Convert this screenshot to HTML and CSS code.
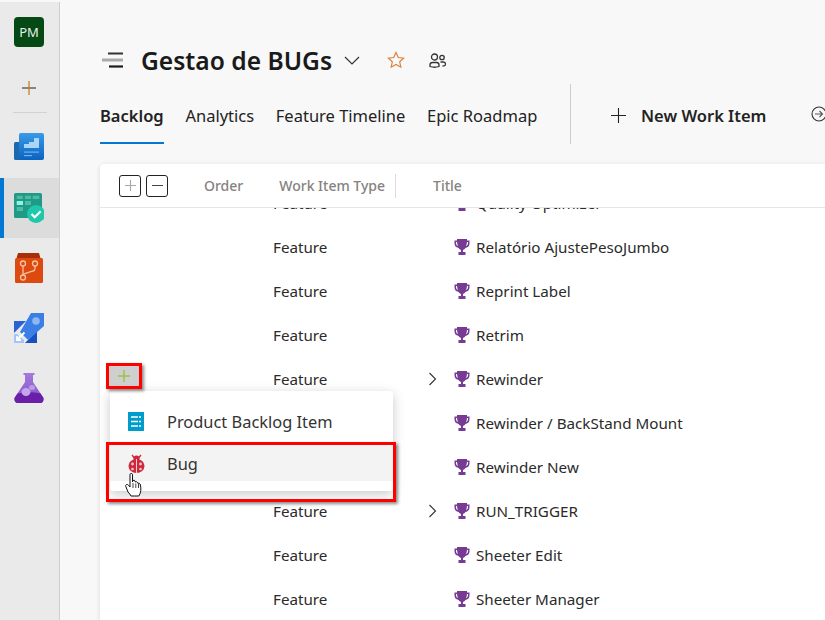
FILE: index.html
```html
<!DOCTYPE html>
<html lang="en">

<head>
    <meta charset="UTF-8">
    <title>Gestao de BUGs - Backlog</title>
    <link rel="stylesheet" href="styles.css">
</head>

<body>
    <nav class="sidebar">
        <div class="nav-project"><span class="avatar">PM</span></div>
        <div class="nav-add">
            <svg width="14" height="14" viewBox="0 0 14 14">
                <path d="M0 7H14" stroke="#222" stroke-width="1" />
                <path d="M7 0V14" stroke="#c8801e" stroke-width="1.300" />
            </svg>
        </div>
        <div class="nav-divider"></div>

        <a class="nav-item">
            <svg width="30" height="30" viewBox="0 0 30 30">
                <defs>
                    <linearGradient id="ov" x1="0" y1="0" x2="0" y2="1">
                        <stop offset="0" stop-color="#3a9ae8" />
                        <stop offset="1" stop-color="#0c62c0" />
                    </linearGradient>
                    <linearGradient id="fl" x1="0" y1="0" x2="0" y2="1">
                        <stop offset="0" stop-color="#a37ade" />
                        <stop offset="1" stop-color="#8550c8" />
                    </linearGradient>
                </defs>
                <rect x="0" y="9" width="8" height="18" rx="1.500" fill="#1b69ae" />
                <rect x="5" y="0" width="25" height="27" rx="2" fill="url(#ov)" />
                <path d="M10 11h5v4h-5zM15 9h5v6h-5zM20 5h5v10h-5z" fill="#a9d6f8" />
                <path d="M10 18.500h15v1.200H10z" fill="#6ab4ee" />
                <path d="M10 22h8v1.200h-8z" fill="#6ab4ee" />
            </svg>
        </a>
        <a class="nav-item active">
            <svg width="30" height="30" viewBox="0 0 30 30">
                <rect x="0" y="0" width="28" height="25" rx="1.500" fill="#1f9a86" />
                <path d="M2.700 2.700h6v3.300h-6zM11 2.700h6v3.300h-6zM18.700 2.700h6.600v3.300h-6.600zM11 8h6v4h-6zM2.700 14h6.300v4h-6.300z" fill="#4dbba6" />
                <rect x="2.700" y="8" width="6.300" height="4" fill="#8ff2e2" />
                <circle cx="22" cy="21" r="9" fill="#1fc7ab" />
                <path d="M17.500 21l3.200 3.200 6-6" fill="none" stroke="#fff" stroke-width="2.200" />
            </svg>
        </a>
        <a class="nav-item">
            <svg width="30" height="30" viewBox="0 0 30 30">
                <path d="M4 0h21l2 7H2z" fill="#a82f08" />
                <rect x="1" y="5" width="28" height="25" rx="1.500" fill="#dd4a10" />
                <g fill="none" stroke="#f8c0a4" stroke-width="1.300">
                    <circle cx="9" cy="10.500" r="2.500" />
                    <circle cx="21" cy="10.500" r="2.500" />
                    <circle cx="9" cy="24.500" r="2.500" />
                    <path d="M9 13v9" />
                    <path d="M21 13v2.500q0 2-2 2.500l-8 2.500q-2 .5-2 2" />
                </g>
            </svg>
        </a>
        <a class="nav-item">
            <svg width="30" height="30" viewBox="0 0 30 30">
                <path d="M0 8H12L0 20z" fill="#2a62d6" />
                <path d="M23 18V30H11z" fill="#1a4fc2" />
                <path d="M17 0H30V13L14 27 6 19z" fill="#3b7fe6" />
                <circle cx="22" cy="8" r="3.800" fill="#8db6f2" />
                <path d="M0 21h3l7 6v3H0z" fill="#a6c4fa" />
                <path d="M3 27L10.500 19.500M3 23v4h4" fill="none" stroke="#fff" stroke-width="1.800" />
            </svg>
        </a>
        <a class="nav-item">
            <svg width="30" height="30" viewBox="0 0 30 30">
                <path d="M9.500 0H20.500V2H19V9L29.500 25Q30 30 26 30H4Q0 30 .5 25L11 9V2H9.500z" fill="url(#fl)" />
                <path d="M3.500 20.500Q15 18 26.500 20.500L29.500 25Q30 30 26 30H4Q0 30 .5 25z" fill="#6a1fa8" />
                <ellipse cx="12" cy="19" rx="4.500" ry="4" fill="#c4a6ea" />
                <ellipse cx="18" cy="14.500" rx="3" ry="2.500" fill="#bd9ce6" />
            </svg>
        </a>
    </nav>

    <main class="content">
        <header class="title-bar">
            <svg class="menu-icon" width="22" height="16" viewBox="0 0 22 16">
                <path d="M6 1.500H21" stroke="#333" stroke-width="2" />
                <path d="M0 8H21" stroke="#aaa" stroke-width="3" />
                <path d="M7 14.500H21" stroke="#1c1c1c" stroke-width="2.200" />
            </svg>
            <h1>Gestao de BUGs</h1>
            <svg class="title-chevron" width="16" height="9" viewBox="0 0 16 9">
                <path d="M1 1l7 7 7-7" fill="none" stroke="#333" stroke-width="1.200" />
            </svg>
            <svg class="star" width="18" height="18" viewBox="0 0 18 18">
                <path d="M9 1.500l2.300 5 5.400.6-4 3.700 1.100 5.400L9 13.500l-4.800 2.700 1.100-5.400-4-3.700 5.400-.6z" fill="none" stroke="#d9823f" stroke-width="1.200" />
            </svg>
            <svg class="people" width="17" height="15" viewBox="0 0 17 15">
                <g fill="none" stroke="#333" stroke-width="1.300">
                    <circle cx="5.500" cy="4" r="3" />
                    <circle cx="13" cy="4.500" r="2.200" />
                    <path d="M1 13.500v-1.500q0-2.500 2.500-2.500h4q2.500 0 2.500 2.500v1.500q-4.500 1.500-9 0z" />
                    <path d="M11.500 9h2.500q2.500 0 2.500 2v.5q0 1.500-3 1.500" />
                </g>
            </svg>
        </header>

        <div class="tab-bar">
            <a class="tab selected">Backlog</a>
            <a class="tab">Analytics</a>
            <a class="tab">Feature Timeline</a>
            <a class="tab">Epic Roadmap</a>
            <div class="tab-sep"></div>
            <a class="new-item">
                <svg width="15" height="15" viewBox="0 0 15 15">
                    <path d="M0 7.500H15M7.500 0V15" stroke="#222" stroke-width="1.100" />
                </svg>
                New Work Item
            </a>
            <svg class="go-icon" width="16" height="16" viewBox="0 0 16 16">
                <circle cx="8" cy="8" r="7" fill="none" stroke="#333" stroke-width="1.100" />
                <path d="M4 8h7.500M8.500 5l3 3-3 3" fill="none" stroke="#555" stroke-width="1.100" />
            </svg>
        </div>

        <section class="card">
            <div class="grid-head">
                <span class="box-btn"><svg width="11" height="11" viewBox="0 0 11 11"><path d="M0 5.500H11M5.500 0V11" stroke="#a8a8a8" stroke-width="1.200" /></svg></span>
                <span class="box-btn"><svg width="11" height="11" viewBox="0 0 11 11"><path d="M0 5.500H11" stroke="#444" stroke-width="1.200" /></svg></span>
                <span class="col-order">Order</span>
                <span class="col-type">Work Item Type</span>
                <span class="col-sep"></span>
                <span class="col-title">Title</span>
            </div>
            <div class="rows">
                <div class="row first">
                    <span>Feature</span><span></span>
                    <svg class="trophy"><use href="#trophy" /></svg>
                    <span>Quality Optimizer</span>
                </div>
                <div class="row">
                    <span>Feature</span><span></span>
                    <svg class="trophy"><use href="#trophy" /></svg>
                    <span>Relatório AjustePesoJumbo</span>
                </div>
                <div class="row">
                    <span>Feature</span><span></span>
                    <svg class="trophy"><use href="#trophy" /></svg>
                    <span>Reprint Label</span>
                </div>
                <div class="row">
                    <span>Feature</span><span></span>
                    <svg class="trophy"><use href="#trophy" /></svg>
                    <span>Retrim</span>
                </div>
                <div class="row">
                    <span>Feature</span>
                    <svg class="expand" width="10" height="14" viewBox="0 0 10 14"><path d="M1.500 1l6 6-6 6" fill="none" stroke="#333" stroke-width="1.100" /></svg>
                    <svg class="trophy"><use href="#trophy" /></svg>
                    <span>Rewinder</span>
                </div>
                <div class="row">
                    <span></span><span></span>
                    <svg class="trophy"><use href="#trophy" /></svg>
                    <span>Rewinder / BackStand Mount</span>
                </div>
                <div class="row">
                    <span></span><span></span>
                    <svg class="trophy"><use href="#trophy" /></svg>
                    <span>Rewinder New</span>
                </div>
                <div class="row">
                    <span>Feature</span>
                    <svg class="expand" width="10" height="14" viewBox="0 0 10 14"><path d="M1.500 1l6 6-6 6" fill="none" stroke="#333" stroke-width="1.100" /></svg>
                    <svg class="trophy"><use href="#trophy" /></svg>
                    <span>RUN_TRIGGER</span>
                </div>
                <div class="row">
                    <span>Feature</span><span></span>
                    <svg class="trophy"><use href="#trophy" /></svg>
                    <span>Sheeter Edit</span>
                </div>
                <div class="row">
                    <span>Feature</span><span></span>
                    <svg class="trophy"><use href="#trophy" /></svg>
                    <span>Sheeter Manager</span>
                </div>
            </div>
        </section>
    </main>

    <!-- overlays: the row's add button, its menu and the red annotation boxes -->
    <div class="add-child">
        <svg width="12" height="12" viewBox="0 0 12 12"><path d="M0 6H12M6 0V12" stroke="#9fc14a" stroke-width="1.500" /></svg>
    </div>
    <div class="menu">
        <div class="menu-item">
            <svg width="16" height="19" viewBox="0 0 16 19">
                <rect width="16" height="19" fill="#009ccc" />
                <path d="M3 5H13M3 9.500H13M3 14H13" stroke="#fff" stroke-width="1.600" />
                <path d="M10.500 3v13" stroke="#009ccc" stroke-width="1" />
            </svg>
            Product Backlog Item
        </div>
        <div class="menu-item hover">
            <svg width="17" height="19" viewBox="0 0 17 19">
                <path d="M4 1l2.500 3M13 1l-2.500 3" stroke="#cc293d" stroke-width="1.300" />
                <circle cx="8.500" cy="4.500" r="3" fill="#cc293d" />
                <ellipse cx="8.500" cy="12" rx="8" ry="7" fill="#cc293d" />
                <path d="M8.500 5v14" stroke="#fff" stroke-width=".8" />
                <g fill="#f3c6cc">
                    <circle cx="4.500" cy="10" r="1.400" />
                    <circle cx="12.500" cy="10" r="1.400" />
                    <circle cx="4.500" cy="15" r="1.300" />
                    <circle cx="12.500" cy="15" r="1.300" />
                </g>
            </svg>
            Bug
        </div>
    </div>
    <div class="mark mark-add"></div>
    <div class="mark mark-bug"></div>
    <svg class="cursor" width="19" height="24" viewBox="0 0 19 24">
        <path d="M5 1.500q0-1 1.200-1t1.300 1V9l.3-1.500q1.700-.8 2.300.5l.2 1q1.700-.8 2.300.5l.2.8q1.700-.5 2.300.7 1 3 .7 6.500-.3 3-2 5.500H6q-1-2-3-4L.8 13.500q-.6-1.500.7-2 1.300-.3 2.200 1L5 14z" fill="#fff" stroke="#111" stroke-width="1" />
        <path d="M8 10v5M10.800 10.500v4.500M13.500 11v4" stroke="#111" stroke-width=".8" />
    </svg>

    <svg class="defs" width="0" height="0">
        <symbol id="trophy" viewBox="0 0 16 18">
            <path d="M3 1h10v1.500h2.500v3q0 3.500-4 4.500-1 1.500-2.500 2v2h2.500v3h-7v-3H7v-2Q5.500 11.500 4.500 10q-4-1-4-4.500v-3H3zM2 4v1.500q0 1.800 2 2.800Q3.200 6.500 3 4zM14 4h-1q-.2 2.500-1 4.300 2-1 2-2.800z" fill="#773b93" fill-rule="evenodd" />
        </symbol>
    </svg>
</body>

</html>
```

FILE: styles.css
```css
* {
    box-sizing: border-box;
}

html,
body {
    margin: 0;
    height: 620px;
    overflow: hidden;
}

body {
    display: flex;
    position: relative;
    padding-top: 2px;
    font-family: "Noto Sans", "Open Sans", sans-serif;
    color: #222;
    background-color: #f8f8f8;
}

.sidebar {
    flex: 0 0 60px;
    display: flex;
    flex-direction: column;
    background-color: #eaeaea;
    border-right: 1px solid #cfcfcf;
}

.nav-project {
    height: 60px;
    padding: 15px 0 0 14px;
}

.avatar {
    display: flex;
    align-items: center;
    justify-content: center;
    width: 30px;
    height: 30px;
    border-radius: 4px;
    color: #e8f0e8;
    font-size: 13px;
    background-color: #054915;
}

.nav-add {
    height: 50px;
    padding: 16px 0 0 22px;
}

.nav-divider {
    width: 34px;
    height: 1px;
    margin: 0 0 5px 13px;
    background-color: #d2d2d2;
}

.nav-item {
    display: flex;
    align-items: center;
    height: 60px;
    padding-left: 14px;
}

.nav-item.active {
    padding-left: 10px;
    border-left: 4px solid #0078d4;
    background-color: #dcdcdc;
}

.content {
    flex: 1;
    min-width: 0;
    padding-left: 40px;
}

.title-bar {
    display: flex;
    align-items: center;
    height: 58px;
    margin-top: 29px;
    padding-left: 2px;
}

.title-bar h1 {
    margin: 0 0 0 17px;
    font-size: 24.600px;
    font-weight: 600;
    color: #1a1a1a;
}

.title-chevron {
    margin-left: 12px;
}

.star {
    margin-left: 27px;
}

.people {
    margin-left: 24px;
}

.tab-bar {
    display: flex;
    align-items: center;
    height: 60px;
    margin-top: -5px;
    font-size: 16.500px;
    white-space: nowrap;
}

.tab {
    display: flex;
    align-items: center;
    height: 60px;
    margin-right: 21.700px;
    padding-top: 4px;
    border-bottom: 2px solid transparent;
}

.tab.selected {
    font-weight: 600;
    border-bottom-color: #0078d4;
}

.tab-sep {
    flex: none;
    width: 1px;
    height: 60px;
    margin-left: 11px;
    background-color: #ccc;
}

.new-item {
    display: flex;
    align-items: center;
    gap: 15px;
    margin-left: 40px;
    padding-top: 2px;
    font-weight: 600;
}

.go-icon {
    flex: none;
    margin-left: 45px;
}

.card {
    height: 456px;
    margin-top: 20px;
    background-color: #fff;
    border-radius: 4px 0 0 0;
    box-shadow: 0 1px 5px rgba(0, 0, 0, .12);
    overflow: hidden;
}

.grid-head {
    display: flex;
    align-items: center;
    height: 44px;
    padding-left: 19px;
    color: #85827f;
    font-size: 14px;
    font-weight: 500;
    border-bottom: 1px solid #e6e6e6;
}

.box-btn {
    display: flex;
    align-items: center;
    justify-content: center;
    width: 22px;
    height: 22px;
    margin-right: 5px;
    border: 1px solid #222;
    border-radius: 3px;
}

.col-order {
    margin-left: 31px;
}

.col-type {
    margin-left: 36px;
}

.col-sep {
    width: 1px;
    height: 24px;
    margin-left: 10px;
    background-color: #ddd;
}

.col-title {
    margin-left: 37px;
}

.rows {
    height: 412px;
    overflow: hidden;
}

.row {
    display: grid;
    grid-template-columns: 160px 21px 22px 1fr;
    align-items: center;
    height: 44px;
    padding-left: 173px;
    font-size: 15.200px;
    color: #2b2b2b;
}

.row.first {
    margin-top: -27px;
}

.expand {
    margin-left: -5px;
}

.trophy {
    width: 16px;
    height: 18px;
}

.add-child {
    position: absolute;
    left: 109px;
    top: 366px;
    display: flex;
    align-items: center;
    justify-content: center;
    width: 30px;
    height: 20px;
    background-color: #cfcfcf;
}

.menu {
    position: absolute;
    left: 110px;
    top: 391px;
    width: 283px;
    height: 100px;
    padding-top: 10px;
    font-size: 16.400px;
    color: #333;
    background-color: #fff;
    border-radius: 3px;
    box-shadow: 0 3px 12px rgba(0, 0, 0, .22);
}

.menu-item {
    display: flex;
    align-items: center;
    gap: 23px;
    height: 40px;
    padding-left: 18px;
}

.menu-item.hover {
    gap: 22px;
    height: 36px;
    margin-top: 4px;
    background-color: #f3f3f3;
}

.mark {
    position: absolute;
    border: 3px solid #f00;
    box-shadow: 2px 2px 3px rgba(0, 0, 0, .45);
}

.mark-add {
    left: 106px;
    top: 363px;
    width: 36px;
    height: 26px;
}

.mark-bug {
    left: 106px;
    top: 442px;
    width: 290px;
    height: 60px;
}

.cursor {
    position: absolute;
    left: 125px;
    top: 473px;
}

.defs {
    position: absolute;
}
```
